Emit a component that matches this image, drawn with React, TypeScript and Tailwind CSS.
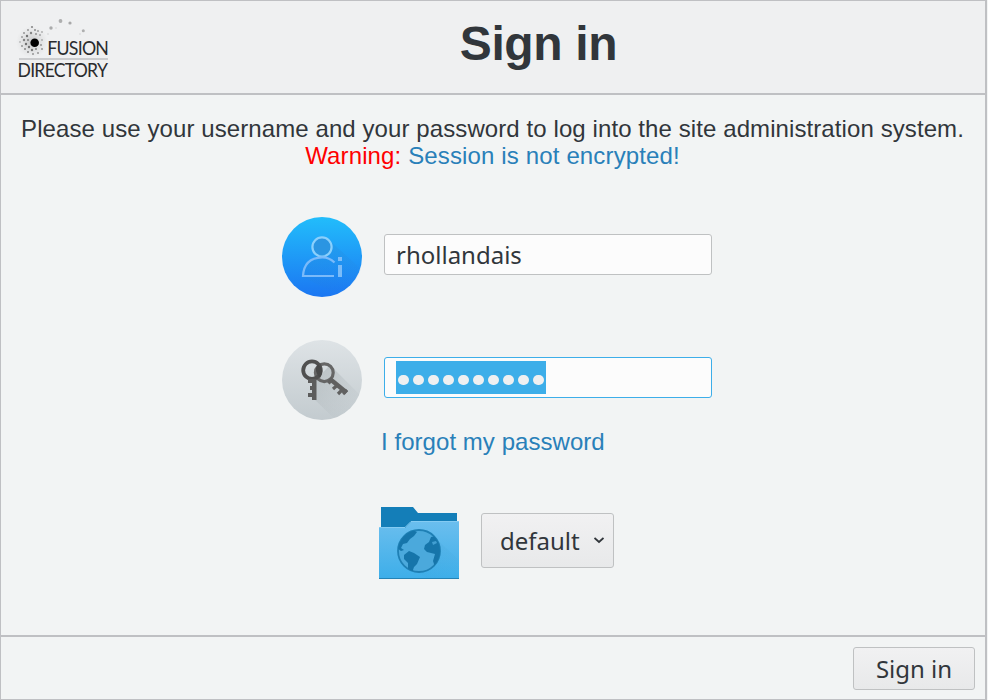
import React from "react";

const DOTS = Array.from({ length: 10 }, (_, i) => i);

const SPECKS: [number, number, number, number][] = [
  [32, 27, 1.1, 0.6], [28, 30, 1, 0.5], [35, 30, 1, 0.55], [24, 33, 1, 0.5], [31, 33, 1.2, 0.6],
  [38, 31, 1, 0.45], [42, 32, 0.9, 0.4], [27, 36, 1.2, 0.7], [22, 37, 1, 0.45], [36, 34, 1, 0.5],
  [40, 35, 1, 0.4], [24, 40, 1.2, 0.6], [28, 40, 1, 0.6], [20, 42, 0.9, 0.3], [26, 44, 1.2, 0.7],
  [22, 46, 1, 0.5], [29, 47, 1.2, 0.7], [25, 49, 1, 0.6], [32, 50, 1.2, 0.65], [28, 52, 1, 0.6],
  [36, 49, 1, 0.6], [33, 54, 1, 0.5], [38, 53, 1, 0.5], [42, 49, 1, 0.5], [41, 45, 1, 0.5],
  [42, 40, 1, 0.35], [51, 28, 1.7, 0.4], [48, 34, 0.8, 0.2], [60.5, 21, 1.9, 0.38],
  [70, 23, 1.6, 0.42], [83.3, 30.7, 1.5, 0.38], [56, 28, 0.7, 0.2], [80, 34, 0.7, 0.2],
];

function Logo() {
  return (
    <svg className="block h-[93px] w-[120px] shrink-0" viewBox="0 0 120 93" role="img" aria-label="Fusion Directory">
      <defs>
        <radialGradient id="halo">
          <stop offset="0" stopColor="#777" stopOpacity=".35" />
          <stop offset="1" stopColor="#aaa" stopOpacity="0" />
        </radialGradient>
      </defs>
      <circle cx="32" cy="42" r="16" fill="url(#halo)" />
      {SPECKS.map(([x, y, r, o], i) => (
        <circle key={i} cx={x} cy={y} r={r} fill="#444" opacity={o} />
      ))}
      <circle cx="34.7" cy="42.7" r="4.3" fill="#000" />
      <path d="M19 59H108" stroke="#cbccce" strokeWidth="2" />
      <g className="tracking-[-0.8px] [font-family:Lato,sans-serif]" fill="#2a2c2e" fontSize="18.8">
        <text x="47.2" y="55.3" textLength="61" lengthAdjust="spacingAndGlyphs">FUSION</text>
        <text x="17.6" y="77" textLength="89.5" lengthAdjust="spacingAndGlyphs">DIRECTORY</text>
      </g>
    </svg>
  );
}

function UserIcon() {
  return (
    <svg className="block h-20 w-20 shrink-0" viewBox="0 0 80 80" fill="none">
      <defs>
        <linearGradient id="user-bg" x2="0" y2="1">
          <stop stopColor="#22bdfb" />
          <stop offset="1" stopColor="#1b76f2" />
        </linearGradient>
        <linearGradient id="user-shadow" x1=".35" x2=".8" y2="1">
          <stop stopColor="#2c7dc8" stopOpacity=".5" />
          <stop offset="1" stopColor="#2c7dc8" stopOpacity="0" />
        </linearGradient>
      </defs>
      <circle cx="40" cy="40" r="40" fill="url(#user-bg)" />
      <path d="M47 23L79 52Q72 72 55 77L21 60Q25 41 40 40Z" fill="url(#user-shadow)" opacity=".45" />
      <circle cx="40" cy="30" r="9.6" fill="#2b95e2" stroke="#8bd0fc" strokeWidth="2.2" />
      <path d="M52 59H21Q22 41 40 40.3Q47 40 52.5 45.5" stroke="#7abafa" strokeWidth="2.2" />
      <path d="M56 40H60V44H56ZM56 48H60V60H56Z" fill="#7bbcf9" />
    </svg>
  );
}

function KeysIcon() {
  return (
    <svg className="block h-20 w-20 shrink-0" viewBox="0 0 80 80" fill="none">
      <defs>
        <linearGradient id="keys-bg" x2="0" y2="1">
          <stop stopColor="#dee3e6" />
          <stop offset="1" stopColor="#c3cbcf" />
        </linearGradient>
        <linearGradient id="keys-shadow" x2=".7" y2="1">
          <stop stopColor="#8e979b" stopOpacity=".4" />
          <stop offset="1" stopColor="#aab2b6" stopOpacity="0" />
        </linearGradient>
        <clipPath id="keys-clip"><circle cx="40" cy="40" r="40" /></clipPath>
      </defs>
      <circle cx="40" cy="40" r="40" fill="url(#keys-bg)" />
      <path clipPath="url(#keys-clip)" d="M48 25L80 57V80H54L33 60L34 40Z" fill="url(#keys-shadow)" />
      <circle cx="42.3" cy="32.7" r="8.9" stroke="#666" strokeWidth="3.2" />
      <path d="M48 39L64.5 52.5" stroke="#606060" strokeWidth="4.4" />
      <path d="M50 39L46.5 43.5M55.5 45L51 49M60 50L56 54M65 50L61 54" stroke="#606060" strokeWidth="3.2" />
      <circle cx="30" cy="30.2" r="8.8" stroke="#505050" strokeWidth="3.8" />
      <path d="M30 39H34.5V60H30V57H26V53H30V50H28V46H30V43H26V39Z" fill="#5c5c5c" />
      <path d="M36 24Q43 30 38 38Q31 31 36 24Z" fill="#484848" />
    </svg>
  );
}

function FolderIcon() {
  return (
    <svg className="block h-[73px] w-[80px] shrink-0" viewBox="0 0 80 73">
      <defs>
        <linearGradient id="folder-front" x2="0" y2="1">
          <stop stopColor="#6abeee" />
          <stop offset="1" stopColor="#3daee9" />
        </linearGradient>
        <linearGradient id="globe-shadow" x2=".7" y2="1">
          <stop stopColor="#3088ba" stopOpacity=".4" />
          <stop offset="1" stopColor="#3088ba" stopOpacity="0" />
        </linearGradient>
        <clipPath id="globe-clip"><circle cx="40" cy="44" r="21" /></clipPath>
      </defs>
      <path d="M2 0H34L39 6H78V33H2Z" fill="#147eb8" />
      <path d="M0 21H26L32 15H80V72H0Z" fill="url(#folder-front)" />
      <path d="M0 20.5H26L32 14.5H80" fill="none" stroke="#84cbf2" />
      <path d="M0 71.5H80" stroke="#2583b5" strokeWidth="1.2" />
      <path d="M55 30L80 53V71H48L28 60Z" fill="url(#globe-shadow)" opacity=".4" />
      <circle cx="40" cy="44" r="21" fill="#4ba9dc" stroke="#1f80b5" strokeWidth="1.8" />
      <g clipPath="url(#globe-clip)" fill="#1675aa">
        <path d="M18 41L22 29L32 22L38 25L35 29L31 32L28 36L24 37L22 41L25 43L22 44Z" />
        <path d="M25 48L30 44L35 46L41 50L38 57L35 60L33 66L29 62L29 56L25 52Z" />
        <path d="M46 38L50 35L52 30L57 29L63 37V54L56 60L54 54L56 47L48 45L45 42Z" />
        <path d="M53 35L57 34L58 36L54 38Z" fill="#429fd2" />
      </g>
    </svg>
  );
}

export default function App() {
  return (
    <div className="h-[700px] w-[988px] overflow-hidden bg-[#f2f4f4] text-[#31363b] [font-family:'Liberation_Sans',Arial,sans-serif]">
      <div className="flex h-full w-[987px] flex-col border-t border-r-2 border-b border-l border-[#bfc0c3]">
        <header className="flex h-[94px] shrink-0 border-b-2 border-[#bfc0c3] bg-[#eff0f1]">
          <div className="-mt-px -ml-px w-[120px] shrink-0">
            <Logo />
          </div>
          <h1 className="w-[837px] pt-[15px] text-center text-[48px] leading-[56px] font-bold tracking-[-0.35px]">Sign in</h1>
        </header>

        <main className="flex grow flex-col items-center">
          <div className="pt-[20px] pr-px text-center text-[24px] leading-[27px] tracking-[0.09px] whitespace-nowrap">
            <p>Please use your username and your password to log into the site administration system.</p>
            <p className="tracking-[0.14px]">
              <span className="text-[#f00]">Warning:</span> <span className="text-[#2980b9]">Session is not encrypted!</span>
            </p>
          </div>

          <form className="flex w-full flex-col">
            <div className="mt-[48px] flex h-20 pl-[281px]">
              <UserIcon />
              <div className="mt-[17px] ml-[22px] flex h-[41px] w-[328px] items-center rounded-[3px] border border-[#bfc1c2] bg-[#fcfcfc] pl-[11px] text-[24px] leading-[33px] [font-family:'Noto_Sans',sans-serif]">
                rhollandais
              </div>
            </div>
            <div className="mt-[43px] flex h-20 pl-[281px]">
              <KeysIcon />
              <div className="mt-[17px] ml-[22px] flex h-[41px] w-[328px] items-center rounded-[3px] border border-[#3daee9] bg-[#fcfcfc] pl-[11px]">
                <span className="flex h-[33px] bg-[#3daee9] pt-[14px]">
                  {DOTS.map((i) => (
                    <span key={i} className="mr-[2px] ml-[2px] h-[10px] w-[11px] rounded-full bg-[#eff0f1]" />
                  ))}
                </span>
              </div>
            </div>
            <a className="mt-[8px] pl-[380px] text-[24px] leading-[27px] tracking-[0.05px] text-[#2980b9]">I forgot my password</a>
            <div className="mt-[52px] flex pl-[378px]">
              <FolderIcon />
              <div className="mt-[6px] ml-[22px] flex h-[55px] w-[133px] items-center rounded-[3px] border border-[#bfc1c2] bg-gradient-to-b from-[#f1f1f2] to-[#e8e9ea] pl-[18px] text-[24px] [font-family:'Noto_Sans',sans-serif]">
                default
                <svg className="ml-[14px] h-[7px] w-[10px]" viewBox="0 0 10 7" fill="none">
                  <path d="M.5 1L5 5L9.5 1" stroke="#31363b" strokeWidth="1.8" />
                </svg>
              </div>
            </div>
          </form>
        </main>

        <footer className="flex h-[64px] shrink-0 justify-end border-t-2 border-[#bfc0c3] pt-[10px] pr-[10px]">
          <button className="h-[43px] w-[122px] rounded-[3px] border border-[#bfc1c2] bg-gradient-to-b from-[#f1f1f2] to-[#e8e9ea] text-[24px] leading-[41px] [font-family:'Noto_Sans',sans-serif]">
            Sign in
          </button>
        </footer>
      </div>
    </div>
  );
}
